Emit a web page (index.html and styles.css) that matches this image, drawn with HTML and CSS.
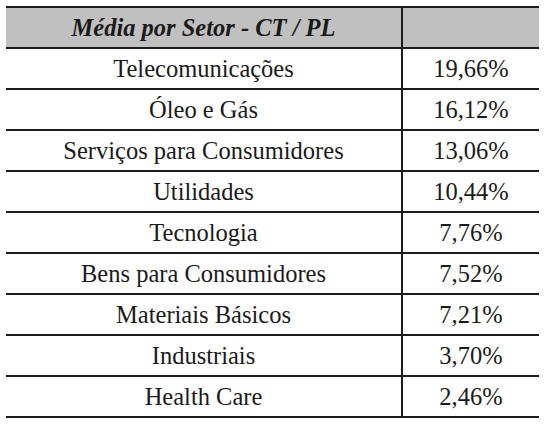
FILE: index.html
```html
<!DOCTYPE html>
<html lang="pt">
<head>
<meta charset="utf-8">
<title>Média por Setor - CT / PL</title>
<link rel="stylesheet" href="styles.css">
</head>
<body>
<div class="table">
  <div class="row head">
    <div class="cell name">Média por Setor - CT / PL</div>
    <div class="cell val"></div>
  </div>
  <div class="row"><div class="cell name">Telecomunicações</div><div class="cell val">19,66%</div></div>
  <div class="row"><div class="cell name">Óleo e Gás</div><div class="cell val">16,12%</div></div>
  <div class="row"><div class="cell name">Serviços para Consumidores</div><div class="cell val">13,06%</div></div>
  <div class="row"><div class="cell name">Utilidades</div><div class="cell val">10,44%</div></div>
  <div class="row"><div class="cell name">Tecnologia</div><div class="cell val">7,76%</div></div>
  <div class="row"><div class="cell name">Bens para Consumidores</div><div class="cell val">7,52%</div></div>
  <div class="row"><div class="cell name">Materiais Básicos</div><div class="cell val">7,21%</div></div>
  <div class="row"><div class="cell name">Industriais</div><div class="cell val">3,70%</div></div>
  <div class="row"><div class="cell name">Health Care</div><div class="cell val">2,46%</div></div>
</div>
</body>
</html>
```

FILE: styles.css
```css
html, body {
  margin: 0;
  padding: 0;
  background: #ffffff;
}

body {
  font-family: "Liberation Serif", Tinos, "Times New Roman", Times, "DejaVu Serif", serif;
  color: #1a1a1a;
  font-size: 24.5px;
}

.table {
  margin: 6px 0 0 6px;
  width: 533px;
  border-bottom: 2px solid #1c1c1c;
}

.row {
  display: grid;
  grid-template-columns: 395px 1fr;
  height: 41px;
  box-sizing: border-box;
  border-top: 2px solid #1c1c1c;
}

.head {
  background: #c0c0c0;
  font-weight: bold;
  font-style: italic;
}

.cell {
  display: flex;
  align-items: center;
  justify-content: center;
  white-space: nowrap;
}

.val {
  border-left: 2px solid #1c1c1c;
}
```
